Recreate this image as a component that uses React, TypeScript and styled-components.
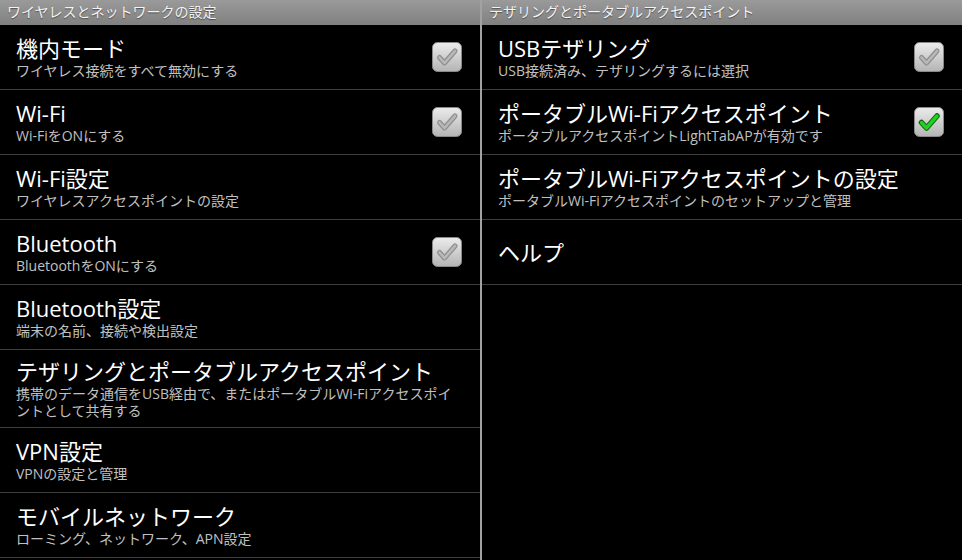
import styled, { createGlobalStyle } from 'styled-components';

type Pref = {
  title: string;
  summary?: string;
  check?: 'off' | 'on';
};

const wirelessPrefs: Pref[] = [
  { title: '機内モード', summary: 'ワイヤレス接続をすべて無効にする', check: 'off' },
  { title: 'Wi-Fi', summary: 'Wi-FiをONにする', check: 'off' },
  { title: 'Wi-Fi設定', summary: 'ワイヤレスアクセスポイントの設定' },
  { title: 'Bluetooth', summary: 'BluetoothをONにする', check: 'off' },
  { title: 'Bluetooth設定', summary: '端末の名前、接続や検出設定' },
  {
    title: 'テザリングとポータブルアクセスポイント',
    summary: '携帯のデータ通信をUSB経由で、またはポータブルWi-Fiアクセスポイントとして共有する',
  },
  { title: 'VPN設定', summary: 'VPNの設定と管理' },
  { title: 'モバイルネットワーク', summary: 'ローミング、ネットワーク、APN設定' },
];

const tetherPrefs: Pref[] = [
  { title: 'USBテザリング', summary: 'USB接続済み、テザリングするには選択', check: 'off' },
  {
    title: 'ポータブルWi-Fiアクセスポイント',
    summary: 'ポータブルアクセスポイントLightTabAPが有効です',
    check: 'on',
  },
  {
    title: 'ポータブルWi-Fiアクセスポイントの設定',
    summary: 'ポータブルWi-Fiアクセスポイントのセットアップと管理',
  },
  { title: 'ヘルプ' },
];

const CheckBox = ({ on }: { on: boolean }) => (
  <svg width="30" height="30" viewBox="0 0 30 30">
    <defs>
      <linearGradient id="boxFill" x1="0" y1="0" x2="0" y2="1">
        <stop offset="0" stopColor="#ececec" />
        <stop offset="1" stopColor="#b4b4b4" />
      </linearGradient>
    </defs>
    <rect x="0.5" y="0.5" width="29" height="29" rx="5" fill="url(#boxFill)" stroke="#8a8a8a" />
    {on ? (
      <>
        <path d="M7.5 15.5 L12.5 21 L23 9" fill="none" stroke="#0b5e0b" strokeWidth="5.5" strokeLinecap="round" strokeLinejoin="round" />
        <path d="M7.5 15.5 L12.5 21 L23 9" fill="none" stroke="#1fd21f" strokeWidth="3.5" strokeLinecap="round" strokeLinejoin="round" />
      </>
    ) : (
      <>
        <path d="M7.5 15.5 L12.5 21 L23 9" fill="none" stroke="#8f8f8f" strokeWidth="5" strokeLinecap="round" strokeLinejoin="round" />
        <path d="M7.5 15.5 L12.5 21 L23 9" fill="none" stroke="#b9b9b9" strokeWidth="2.6" strokeLinecap="round" strokeLinejoin="round" />
      </>
    )}
  </svg>
);

const PrefList = ({ header, prefs }: { header: string; prefs: Pref[] }) => (
  <Panel>
    <PanelHeader>{header}</PanelHeader>
    {prefs.map(p => (
      <PrefRow key={p.title}>
        <PrefText>
          <Title>{p.title}</Title>
          {p.summary && <Summary>{p.summary}</Summary>}
        </PrefText>
        {p.check && (
          <Widget>
            <CheckBox on={p.check === 'on'} />
          </Widget>
        )}
      </PrefRow>
    ))}
  </Panel>
);

const App = () => (
  <>
    <GlobalStyle />
    <Screen>
      <PrefList header="ワイヤレスとネットワークの設定" prefs={wirelessPrefs} />
      <Separator />
      <PrefList header="テザリングとポータブルアクセスポイント" prefs={tetherPrefs} />
    </Screen>
  </>
);

const GlobalStyle = createGlobalStyle`
  body {
    margin: 0;
    background: #000;
    font-family: 'Open Sans', 'Noto Sans CJK JP', sans-serif;
  }
`;

const Screen = styled.div`
  display: flex;
  width: 962px;
  height: 560px;
  background: #000;
  overflow: hidden;
`;

const Panel = styled.section`
  width: 480px;
  display: flex;
  flex-direction: column;
`;

const Separator = styled.div`
  width: 2px;
  background: #a2a2a2;
`;

const PanelHeader = styled.div`
  flex: none;
  height: 25px;
  line-height: 24px;
  padding-left: 7px;
  font-size: 14px;
  color: #f4f4f4;
  text-shadow: 0 1px 1px rgba(0, 0, 0, 0.45);
  background: linear-gradient(#9a9a9a, #808080);
  white-space: nowrap;
`;

const PrefRow = styled.div`
  flex: none;
  display: flex;
  align-items: center;
  min-height: 65px;
  box-sizing: border-box;
  padding: 8px 18px 8px 16px;
  border-bottom: 1px solid #3e3e3e;
`;

const PrefText = styled.div`
  flex: 1;
  min-width: 0;
  padding-right: 6px;
`;

const Title = styled.div`
  font-size: 22px;
  line-height: 26px;
  color: #fff;
  white-space: nowrap;
`;

const Summary = styled.div`
  margin-top: 1px;
  font-size: 14px;
  line-height: 17px;
  color: #c0c0c0;
`;

const Widget = styled.div`
  display: flex;
  width: 30px;
  height: 30px;
  margin-left: 8px;
`;

export default App;
